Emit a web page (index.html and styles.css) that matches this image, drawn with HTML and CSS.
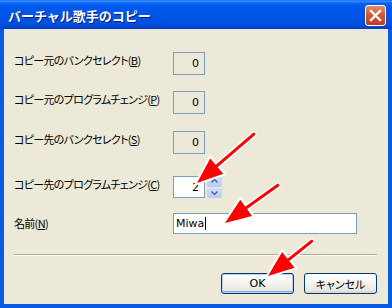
FILE: index.html
```html
<!DOCTYPE html>
<html lang="ja">
<head>
  <meta charset="UTF-8" />
  <title>バーチャル歌手のコピー</title>
  <link rel="stylesheet" href="styles.css">
</head>
<body>
  <div class="window">
    <div class="titlebar">
      <span class="title">バーチャル歌手のコピー</span>
      <span class="close">
        <svg width="13" height="13" viewBox="0 0 13 13"><path d="M2 2 L11 11 M11 2 L2 11" stroke="#fff" stroke-width="2.4" stroke-linecap="square"/></svg>
      </span>
    </div>
    <div class="client">
      <div class="row">
        <label>コピー元のバンクセレクト(<u>B</u>)</label>
        <div class="field ro">0</div>
      </div>
      <div class="row gap16">
        <label>コピー元のプログラムチェンジ(<u>P</u>)</label>
        <div class="field ro">0</div>
      </div>
      <div class="row gap17">
        <label>コピー先のバンクセレクト(<u>S</u>)</label>
        <div class="field ro">0</div>
      </div>
      <div class="row gap22">
        <label>コピー先のプログラムチェンジ(<u>C</u>)</label>
        <div class="spin">
          <div class="field num">2</div>
          <div class="updown">
            <span class="ud"><svg width="7" height="4" viewBox="0 0 7 4"><path d="M0.5 3.5 L3.5 0.5 L6.5 3.5" fill="none" stroke="#4d6185" stroke-width="1.4"/></svg></span>
            <span class="ud"><svg width="7" height="4" viewBox="0 0 7 4"><path d="M0.5 0.5 L3.5 3.5 L6.5 0.5" fill="none" stroke="#4d6185" stroke-width="1.4"/></svg></span>
          </div>
        </div>
      </div>
      <div class="row gap15">
        <label class="name-label">名前(<u>N</u>)</label>
        <div class="field name">Miwa<span class="caret"></span></div>
      </div>
      <hr class="sep">
      <div class="buttons">
        <button class="btn default">OK</button>
        <button class="btn">キャンセル</button>
      </div>
    </div>

    <svg class="arrows" width="392" height="308" viewBox="0 0 392 308">
      <!-- white outlines first, red on top -->
      <g stroke="#fff" fill="#fff" stroke-linejoin="round" stroke-linecap="round">
        <g transform="translate(197 183) rotate(139.3)">
          <line x1="-75" y1="0" x2="-20" y2="0" stroke-width="6"/>
          <polygon points="1,0 -27,-11 -27,11" stroke-width="3"/>
        </g>
        <g transform="translate(225 223) rotate(144.4)">
          <line x1="-65" y1="0" x2="-20" y2="0" stroke-width="6"/>
          <polygon points="1,0 -27,-11 -27,11" stroke-width="3"/>
        </g>
        <g transform="translate(268 276) rotate(141.5)">
          <line x1="-56" y1="0" x2="-20" y2="0" stroke-width="6"/>
          <polygon points="1,0 -27,-11 -27,11" stroke-width="3"/>
        </g>
      </g>
      <g stroke="#f00" fill="#f00" stroke-linecap="round">
        <g transform="translate(197 183) rotate(139.3)">
          <line x1="-75" y1="0" x2="-20" y2="0" stroke-width="3"/>
          <polygon points="0,0 -26,-10 -26,10" stroke="none"/>
        </g>
        <g transform="translate(225 223) rotate(144.4)">
          <line x1="-65" y1="0" x2="-20" y2="0" stroke-width="3"/>
          <polygon points="0,0 -26,-10 -26,10" stroke="none"/>
        </g>
        <g transform="translate(268 276) rotate(141.5)">
          <line x1="-56" y1="0" x2="-20" y2="0" stroke-width="3"/>
          <polygon points="0,0 -26,-10 -26,10" stroke="none"/>
        </g>
      </g>
    </svg>
  </div>
</body>
</html>
```

FILE: styles.css
```css
* {
  box-sizing: border-box;
}
body {
  margin: 0;
  background: #0054e3;
  font-family: "Noto Sans CJK JP", sans-serif;
  color: #000;
}
.window {
  position: relative;
  width: 392px;
  height: 308px;
  display: flex;
  flex-direction: column;
}
.titlebar {
  height: 29px;
  display: flex;
  align-items: center;
  justify-content: space-between;
  padding: 1px 6px 0 8px;
  background: linear-gradient(to bottom, #0a5fff 0, #3d95ff 1px, #0a66f5 3px, #0058ee 6px, #0055e5 50%, #0052e0 80%, #0046d4 93%, #003dbf 100%);
}
.title {
  color: #fff;
  font-weight: bold;
  font-size: 13px;
  text-shadow: 1px 1px 0 #0a1883;
}
.close {
  width: 21px;
  height: 21px;
  border: 1px solid #fff;
  border-radius: 3px;
  background: linear-gradient(to bottom, #e68a6a, #d55533 50%, #c2391b);
  display: flex;
  align-items: center;
  justify-content: center;
}
.client {
  flex: 1;
  background: #ece9d8;
  border: 4px solid #0a5ae8;
  border-top: 0;
  padding: 23px 11px 0 10px;
  display: flex;
  flex-direction: column;
}
.row {
  display: flex;
  align-items: flex-start;
}
.gap15 { margin-top: 15px; }
.gap16 { margin-top: 16px; }
.gap17 { margin-top: 17px; }
.gap22 { margin-top: 22px; }
.row label {
  width: 159px;
  flex: none;
  white-space: nowrap;
  font-size: 11px;
  line-height: 14px;
  padding-top: 1px;
  letter-spacing: -0.7px;
  font-feature-settings: "palt";
}
.row label.name-label {
  padding-top: 3px;
}
.field {
  height: 23px;
  border: 1px solid #7f9db9;
  font-family: "DejaVu Sans", sans-serif;
  font-size: 11px;
  display: flex;
  align-items: center;
}
.ro {
  width: 32px;
  justify-content: flex-end;
  padding-right: 5px;
  background: #ece9d8;
}
.spin {
  display: flex;
  gap: 2px;
}
.num {
  width: 32px;
  height: 22px;
  justify-content: flex-end;
  padding-right: 5px;
  background: #fff;
}
.updown {
  width: 15px;
  height: 22px;
  display: flex;
  flex-direction: column;
  gap: 1px;
}
.ud {
  flex: 1;
  display: flex;
  align-items: center;
  justify-content: center;
  background: linear-gradient(to bottom, #d3e0fb, #b8cbf4);
  border-radius: 2px;
}
.name {
  width: 184px;
  height: 21px;
  padding-left: 2px;
  background: #fff;
}
.caret {
  display: inline-block;
  width: 1px;
  height: 13px;
  margin-left: 1px;
  background: #000;
}
.sep {
  margin: 20px 0 0 0;
  height: 0;
  border: 0;
  border-top: 1px solid #aca899;
  border-bottom: 1px solid #fff;
}
.buttons {
  display: flex;
  justify-content: flex-end;
  gap: 10px;
  margin-top: 17px;
}
.btn {
  width: 73px;
  height: 21px;
  padding: 0;
  border: 1px solid #003c74;
  border-radius: 3px;
  background: linear-gradient(to bottom, #fff, #f4f3ee 50%, #e9e7df 85%, #d6d0c5);
  font-family: "Noto Sans CJK JP", sans-serif;
  font-size: 11px;
  color: #000;
  font-feature-settings: "palt";
}
.btn.default {
  font-family: "DejaVu Sans", sans-serif;
  box-shadow: inset 0 0 0 1px #b9d1f5, inset 0 -2px 0 0 #8aa9e6;
}
.arrows {
  position: absolute;
  top: 0;
  left: 0;
  pointer-events: none;
}
```
